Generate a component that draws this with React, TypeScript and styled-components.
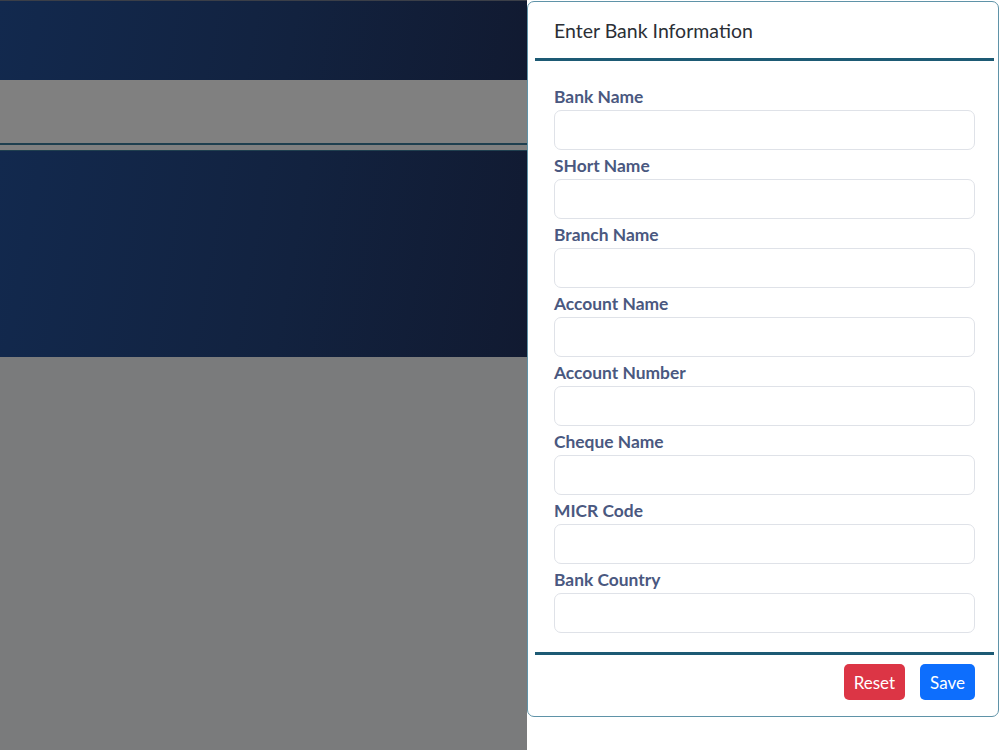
import React from "react";
import styled, { createGlobalStyle } from "styled-components";

const GlobalStyle = createGlobalStyle`
  html, body {
    margin: 0;
    padding: 0;
    background: #ffffff;
    font-family: Lato, "Open Sans", sans-serif;
  }
  * { box-sizing: border-box; }
`;

const Page = styled.div`
  display: grid;
  grid-template-columns: 527px 1fr;
  width: 1000px;
  height: 750px;
  overflow: hidden;
`;

const Backdrop = styled.div`
  display: flex;
  flex-direction: column;
  background: #7a7b7c;
  border-top: 1px solid #3b3f48;
`;

const NavyBand = styled.div<{ $h: number }>`
  height: ${(p) => p.$h}px;
  background: linear-gradient(100deg, #12294e 0%, #12223f 55%, #111a31 100%);
`;

const GrayBand = styled.div<{ $h: number }>`
  height: ${(p) => p.$h}px;
  background: #808080;
`;

const Rule = styled.div<{ $h: number }>`
  height: ${(p) => p.$h}px;
  background: #1f3f4f;
`;

const PanelColumn = styled.div`
  padding: 1px 1px 0 0;
  background: #ffffff;
`;

const Panel = styled.section`
  width: 472px;
  height: 716px;
  display: flex;
  flex-direction: column;
  background: #ffffff;
  border: 1px solid #5f93a8;
  border-radius: 7px;
`;

const Header = styled.header`
  height: 56px;
  display: flex;
  align-items: center;
  padding: 0 26px;
  font-size: 19.5px;
  color: #2b2f36;
`;

const Divider = styled.hr`
  margin: 0 4px 0 7px;
  border: 0;
  height: 3px;
  background: #1d5a74;
`;

const Body = styled.form`
  flex: 1;
  display: flex;
  flex-direction: column;
  padding: 26px 23px 0 26px;
`;

const Field = styled.div`
  display: flex;
  flex-direction: column;
  gap: 3px;
  margin-bottom: 6px;
`;

const Label = styled.label`
  font-size: 17.4px;
  line-height: 20px;
  font-weight: 700;
  color: #4a5880;
`;

const Input = styled.input`
  height: 40px;
  width: 100%;
  border: 1px solid #dfe2e8;
  border-radius: 7px;
  background: #ffffff;
  font: inherit;
  padding: 0 12px;
  outline: none;
`;

const Footer = styled.footer`
  height: 61px;
  display: flex;
  justify-content: flex-end;
  align-items: flex-start;
  gap: 15px;
  padding: 9px 23px 0 0;
`;

const Button = styled.button<{ $tone: "danger" | "primary" }>`
  height: 36px;
  padding: 0 10px;
  border: 0;
  border-radius: 5px;
  font-family: Lato, sans-serif;
  font-size: 17px;
  color: #ffffff;
  background: ${(p) => (p.$tone === "danger" ? "#dc3545" : "#0d6efd")};
`;

const fields = [
  "Bank Name",
  "SHort Name",
  "Branch Name",
  "Account Name",
  "Account Number",
  "Cheque Name",
  "MICR Code",
  "Bank Country",
];

export default function App() {
  return (
    <>
      <GlobalStyle />
      <Page>
        <Backdrop>
          <NavyBand $h={79} />
          <GrayBand $h={63} />
          <Rule $h={2} />
          <GrayBand $h={5} />
          <Rule $h={1} />
          <NavyBand $h={206} />
        </Backdrop>
        <PanelColumn>
          <Panel>
            <Header>Enter Bank Information</Header>
            <Divider />
            <Body>
              {fields.map((f) => (
                <Field key={f}>
                  <Label>{f}</Label>
                  <Input />
                </Field>
              ))}
            </Body>
            <Divider />
            <Footer>
              <Button $tone="danger" type="button">Reset</Button>
              <Button $tone="primary" type="button">Save</Button>
            </Footer>
          </Panel>
        </PanelColumn>
      </Page>
    </>
  );
}
